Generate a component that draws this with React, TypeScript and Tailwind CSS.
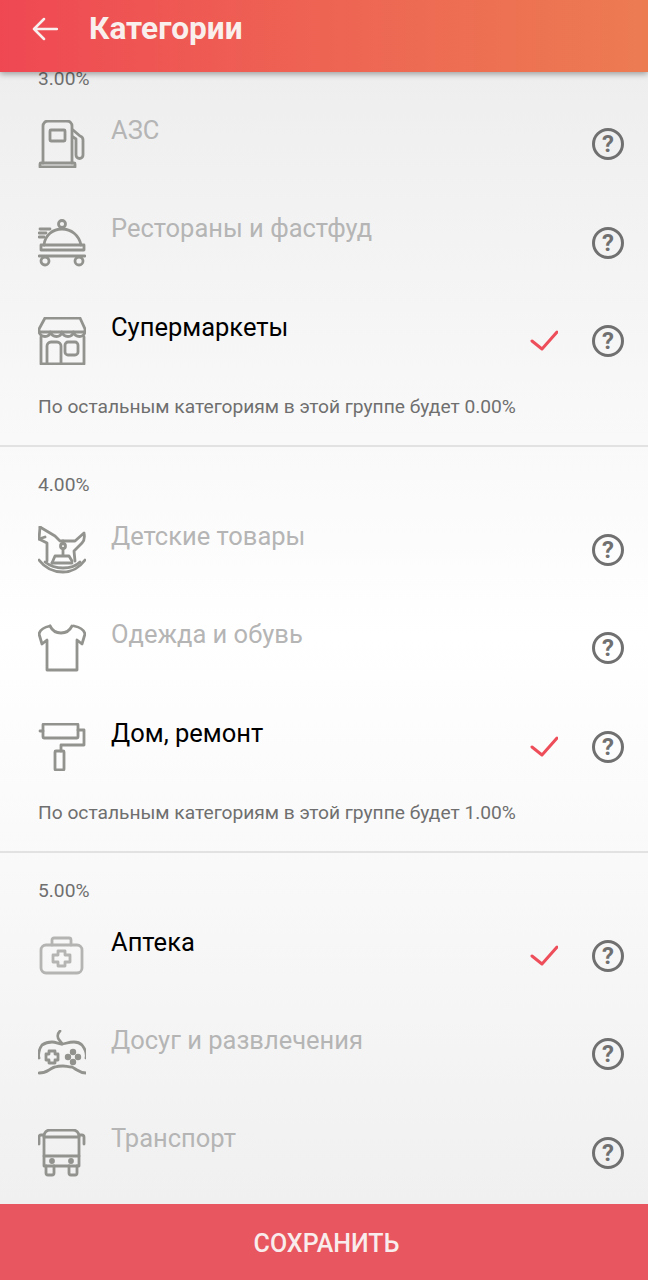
import React from 'react';

const Icon = ({ children, light }: { children: React.ReactNode; light?: boolean }) => (
  <svg
    viewBox="0 0 48 48"
    fill="none"
    strokeWidth={2.8}
    strokeLinecap="round"
    strokeLinejoin="round"
    className={light ? 'w-12 h-12 shrink-0 stroke-[#b4b4b2]' : 'w-12 h-12 shrink-0 stroke-[#92928e]'}
  >
    {children}
  </svg>
);

const icons: Record<string, React.ReactNode> = {
  fuel: (
    <Icon>
      <path d="M5 43V6a5 5 0 0 1 5-5h19a5 5 0 0 1 5 5v37" />
      <path d="M2 47v-3a1 1 0 0 1 1-1h33a1 1 0 0 1 1 1v3z" />
      <rect x="12" y="10" width="15" height="11" rx="1" />
      <path d="M35 10l7 6a4 4 0 0 1 3 4v15a3.500 3.500 0 0 1-7 0V19l-3-2" />
    </Icon>
  ),
  food: (
    <Icon>
      <circle cx="24" cy="5" r="3.500" />
      <path d="M6 26C7 16 15 10 24 10s17 6 19 16" />
      <path d="M2 10h10M1 14h7M1 18h5" />
      <path d="M3 26h43v5H3z" />
      <path d="M1 37h46" />
      <circle cx="7" cy="42" r="4" />
      <circle cx="41" cy="42" r="4" />
    </Icon>
  ),
  store: (
    <Icon>
      <path d="M7 1h35l5 11v3H1v-3z" />
      <path d="M1 15c2 6 10 6 11.500 0 2 6 10 6 11.500 0 2 6 10 6 11.500 0 2 6 10 6 11.500 0" />
      <path d="M3 20v27h43V20" />
      <path d="M9 47V29a4 4 0 0 1 4-4h6a4 4 0 0 1 4 4v18" />
      <rect x="27" y="25" width="13" height="13" rx="3" />
    </Icon>
  ),
  horse: (
    <Icon>
      <path d="M2 1l15 9 5 5h15l9-8c1 5 0 8-2 10l-8 8 1 10" />
      <path d="M2 1L1 13l8 4 0 18" />
      <path d="M1 13l6-2" />
      <path d="M25 15v3M25 23v6" />
      <circle cx="25" cy="20" r="2.500" />
      <path d="M14 37l3-7h14l3 5" />
      <path d="M14 37h20" />
      <path d="M1 34c6 8 14 12 24 12s16-4 22-12" />
      <path d="M7 36c5 4 11 6 18 6s13-2 17-6" />
    </Icon>
  ),
  shirt: (
    <Icon>
      <path d="M12 2c3 6 7 7 11 7s8-1 11-7" />
      <path d="M12 2C7 3 2 6 1 10l3 10 5-4v30h30V16l5 4 3-10c-1-4-6-7-11-8" />
    </Icon>
  ),
  roller: (
    <Icon>
      <rect x="5" y="1" width="35" height="14" rx="1" />
      <path d="M2 8h3M40 7h6v15H23v6" />
      <rect x="17" y="28" width="9" height="19" rx="1" />
    </Icon>
  ),
  kit: (
    <Icon light>
      <rect x="3" y="13" width="41" height="28" rx="5" />
      <path d="M14 13V8a2 2 0 0 1 2-2h15a2 2 0 0 1 2 2v5" />
      <path d="M20 20h7v4h5v7h-5v4h-7v-4h-5v-7h5z" transform="translate(0 -1)" />
    </Icon>
  ),
  game: (
    <Icon>
      <path d="M22 1c-3 3-3 7 0 10 1 1 2 2 2 3" />
      <path d="M1 28c-1-3 0-9 3-13 3-2 7-3 10-3 4 0 7 2 10 2s6-2 12-2c3 0 6 1 8 3 3 4 5 9 4 13" />
      <path d="M1 43c4 0 7-1 10-3 2-1 4-3 6-3 3-1 5-1 8-1s5 1 9 1c2 1 3 2 5 3 3 2 6 3 9 3" />
      <path d="M11 24v-3h6v3h3v6h-3v3h-6v-3H8v-6z" />
      <circle cx="30" cy="27" r="1.800" fill="#92928e" />
      <circle cx="35" cy="22" r="1.800" fill="#92928e" />
      <circle cx="40" cy="27" r="1.800" fill="#92928e" />
      <circle cx="35" cy="32" r="1.800" fill="#92928e" />
    </Icon>
  ),
  bus: (
    <Icon>
      <path d="M6 37V7a6 6 0 0 1 6-6h23a6 6 0 0 1 6 6v30z" />
      <path d="M1 15V8a2 2 0 0 1 2-2h3M46 15V8a2 2 0 0 0-2-2h-3" />
      <path d="M6 8h35M6 27h35" />
      <circle cx="14" cy="32" r="1.500" />
      <circle cx="33" cy="32" r="1.500" />
      <path d="M8 37v7a2 2 0 0 0 2 2h4a2 2 0 0 0 2-2v-7M31 37v7a2 2 0 0 0 2 2h4a2 2 0 0 0 2-2v-7" />
    </Icon>
  ),
};

const groups = [
  {
    percent: '3.00%',
    rest: 'По остальным категориям в этой группе будет 0.00%',
    items: [
      { icon: 'fuel', name: 'АЗС' },
      { icon: 'food', name: 'Рестораны и фастфуд' },
      { icon: 'store', name: 'Супермаркеты', on: true },
    ],
  },
  {
    percent: '4.00%',
    rest: 'По остальным категориям в этой группе будет 1.00%',
    items: [
      { icon: 'horse', name: 'Детские товары' },
      { icon: 'shirt', name: 'Одежда и обувь' },
      { icon: 'roller', name: 'Дом, ремонт', on: true },
    ],
  },
  {
    percent: '5.00%',
    items: [
      { icon: 'kit', name: 'Аптека', on: true },
      { icon: 'game', name: 'Досуг и развлечения' },
      { icon: 'bus', name: 'Транспорт' },
    ],
  },
];

const Row = ({ icon, name, on }: { icon: string; name: string; on?: boolean }) => (
  <div className="flex items-center h-[98.4px] pl-[38px] pr-[24px]">
    {icons[icon]}
    <span className={on ? 'self-start mt-[20px] ml-[25px] flex-1 text-[25.5px] font-[450] leading-[30px] text-black' : 'self-start mt-[20px] ml-[25px] flex-1 text-[25.5px] font-[450] leading-[30px] text-[#b5b5b5]'}>
      {name}
    </span>
    {on && (
      <svg viewBox="0 0 28 22" fill="none" className="w-[28px] h-[22px] mr-[34px] stroke-[#ee4d5a]" strokeWidth={3} strokeLinecap="round" strokeLinejoin="round">
        <path d="M2 11l10 8L27 2" />
      </svg>
    )}
    <div className="w-8 h-8 rounded-full border-[3px] border-[#707070] flex items-center justify-center text-[24px] font-bold leading-none text-[#707070]">
      ?
    </div>
  </div>
);

export default function App() {
  return (
    <div className="w-[648px] h-[1280px] flex flex-col overflow-hidden font-['Roboto',sans-serif]">
      <header className="relative z-10 h-[72px] shrink-0 flex items-center pl-[32px] pb-[15px] bg-gradient-to-r from-[#ef4853] to-[#ec7b52] shadow-[0_2px_6px_rgba(0,0,0,0.35)]">
        <svg viewBox="0 0 26 24" fill="none" className="w-[26px] h-[24px] stroke-[#f7f0ee]" strokeWidth={2.500} strokeLinecap="round" strokeLinejoin="round">
          <path d="M25 12H2M12 2L2 12l10 10" />
        </svg>
        <h1 className="ml-[31px] text-[31.6px] font-bold text-[#f9f0ee]">Категории</h1>
      </header>
      <main className="flex-1 overflow-hidden bg-gradient-to-b from-[#eeeeee] via-white to-[#f0f0f0]">
        <div className="-mt-[31px]">
          {groups.map(group => (
            <section key={group.percent} className={group.rest ? 'pt-[26px] pb-[25.6px] border-b-2 border-[#e2e2e2]' : 'pt-[26px]'}>
              <div className="pl-[38px] h-6 mb-1 text-[19.2px] font-[450] leading-6 text-[#6f6f6f]">{group.percent}</div>
              {group.items.map(item => (
                <Row key={item.name} {...item} />
              ))}
              {group.rest && (
                <div className="pl-[38px] mt-[5px] h-6 text-[19.2px] font-[450] leading-6 text-[#6f6f6f]">{group.rest}</div>
              )}
            </section>
          ))}
        </div>
      </main>
      <button className="h-[76px] shrink-0 pt-[3px] pl-[5px] bg-[#e8565f] text-[25px] font-medium text-[#f9ecec]">СОХРАНИТЬ</button>
    </div>
  );
}
